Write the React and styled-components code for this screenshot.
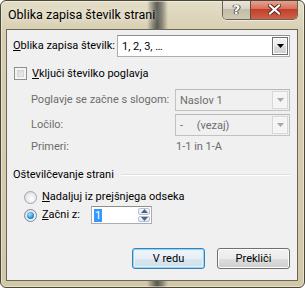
import React from 'react'
import styled, { createGlobalStyle, css } from 'styled-components'

const GlobalStyle = createGlobalStyle`
    html, body {
        margin: 0;
        padding: 0;
        background: #ffffff;
    }
    body {
        font-family: Roboto, "Liberation Sans", sans-serif;
        font-size: 11px;
        color: #000;
    }
`

function DropArrow({ disabled }) {
    return (
        <svg width="7" height="4" viewBox="0 0 7 4">
            <path d="M0 0 H7 L3.5 4 Z" fill={disabled ? '#a8a8a8' : '#000'} />
        </svg>
    )
}

function Select({ value, width, disabled }) {
    return (
        <SelectBox $width={width} $disabled={disabled}>
            <SelectText $disabled={disabled}>{value}</SelectText>
            <DropButton $disabled={disabled}>
                <DropArrow disabled={disabled} />
            </DropButton>
        </SelectBox>
    )
}

function App() {
    return (
        <>
            <GlobalStyle />
            <Window>
                <TitleBar>
                    <Title>Oblika zapisa številk strani</Title>
                    <CaptionButtons>
                        <CaptionButton>
                            <HelpGlyph>?</HelpGlyph>
                        </CaptionButton>
                        <CaptionButton $close>
                            <svg width="13" height="11" viewBox="0 0 13 11">
                                <path d="M2 1.5 L11 9.5 M11 1.5 L2 9.5" stroke="#5a2418" strokeWidth="4" strokeLinecap="square" />
                                <path d="M2 1.5 L11 9.5 M11 1.5 L2 9.5" stroke="#ffffff" strokeWidth="2.2" strokeLinecap="square" />
                            </svg>
                        </CaptionButton>
                    </CaptionButtons>
                </TitleBar>

                <Client>
                    <Row $top={5} $left={6} $height={22}>
                        <Label $width={104}><u>O</u>blika zapisa številk:</Label>
                        <Select value="1, 2, 3, …" width={173} />
                    </Row>

                    <Row $top={10} $left={7} $height={13}>
                        <CheckBox />
                        <Label $gap={5}><u>V</u>ključi številko poglavja</Label>
                    </Row>

                    <Row $top={9} $left={24} $height={22}>
                        <Label $width={144} $disabled>Poglavje se začne s slogom:</Label>
                        <Select value="Naslov 1" width={115} disabled />
                    </Row>
                    <Row $top={3} $left={24} $height={22}>
                        <Label $width={144} $disabled>Ločilo:</Label>
                        <Select value={<>-&nbsp;&nbsp;&nbsp;&nbsp;&nbsp;(vezaj)</>} width={115} disabled />
                    </Row>
                    <Row $top={4} $left={24} $height={14}>
                        <Label $width={145} $disabled>Primeri:</Label>
                        <Label $disabled>1-1 in 1-A</Label>
                    </Row>

                    <GroupHeader>
                        <span>Oštevilčevanje strani</span>
                        <GroupLine />
                    </GroupHeader>

                    <Row $top={7} $left={17} $height={16}>
                        <Radio />
                        <Label $gap={5}><u>N</u>adaljuj iz prejšnjega odseka</Label>
                    </Row>
                    <Row $top={1} $left={17} $height={18}>
                        <Radio $checked />
                        <Label $gap={5} $width={49}><u>Z</u>ačni z:</Label>
                        <SpinBox>
                            <SpinValue><Selected>1</Selected></SpinValue>
                            <SpinButtons>
                                <SpinButton>
                                    <svg width="7" height="4" viewBox="0 0 7 4"><path d="M0 4 H7 L3.5 0 Z" fill="#4d6185" /></svg>
                                </SpinButton>
                                <SpinButton>
                                    <svg width="7" height="4" viewBox="0 0 7 4"><path d="M0 0 H7 L3.5 4 Z" fill="#4d6185" /></svg>
                                </SpinButton>
                            </SpinButtons>
                        </SpinBox>
                    </Row>

                    <ButtonRow>
                        <PushButton $default>V redu</PushButton>
                        <PushButton>Prekliči</PushButton>
                    </ButtonRow>
                </Client>
            </Window>
        </>
    )
}

export default App


const Window = styled.div`
    position: relative;
    width: 305px;
    height: 288px;
    box-sizing: border-box;
    border: 1px solid #4a4638;
    border-radius: 6px;
    background:
        linear-gradient(90deg,
            rgba(0,0,0,0) 0, rgba(0,0,0,0) 146px,
            rgba(70,70,66,0.55) 152px, rgba(60,62,60,0.8) 156px, rgba(70,70,66,0.55) 161px,
            rgba(0,0,0,0) 167px),
        linear-gradient(180deg, #e4ddc6 0, #d8cfb2 30px, #d2c8a8 100%);
    box-shadow: inset 0 0 0 1px rgba(255,255,255,0.45);
    display: flex;
    flex-direction: column;
    overflow: hidden;
`

const TitleBar = styled.div`
    height: 28px;
    display: flex;
    align-items: flex-start;
`

const Title = styled.div`
    padding: 6px 0 0 7px;
    font-size: 12.5px;
    line-height: 16px;
    color: #000;
    text-shadow: 0 0 6px rgba(255,255,255,0.9);
`

const CaptionButtons = styled.div`
    margin-left: auto;
    margin-right: 6px;
    margin-top: -1px;
    display: flex;
    height: 19px;
    border: 1px solid #6a6456;
    border-top: none;
    border-radius: 0 0 5px 5px;
    overflow: hidden;
    box-shadow: 0 1px 0 rgba(255,255,255,0.5);
`

const CaptionButton = styled.div`
    width: ${p => p.$close ? 47 : 27}px;
    height: 19px;
    display: flex;
    align-items: center;
    justify-content: center;
    box-sizing: border-box;
    background: linear-gradient(180deg, #ede9de 0, #d9d3c3 45%, #c4bca7 50%, #cfc8b4 100%);
    ${p => p.$close && css`
        border-left: 1px solid #6a4a3c;
        background: linear-gradient(180deg, #e8a898 0, #d8725c 45%, #c2402a 50%, #d06048 100%);
    `}
`

const HelpGlyph = styled.span`
    font-family: "DejaVu Sans", sans-serif;
    font-weight: 700;
    font-size: 13px;
    line-height: 13px;
    color: #ffffff;
    text-shadow: 0 0 1px #3a3a3a, 0 0 1px #3a3a3a, 1px 0 0 #555, -1px 0 0 #555;
`

const Client = styled.div`
    margin: 0 6px 6px 5px;
    height: 252px;
    box-sizing: border-box;
    border: 1px solid #6b6658;
    background: #f0f0f0;
    display: flex;
    flex-direction: column;
`

const Row = styled.div`
    display: flex;
    align-items: center;
    height: ${p => p.$height}px;
    margin-top: ${p => p.$top}px;
    padding-left: ${p => p.$left}px;
`

const Label = styled.span`
    flex: none;
    white-space: nowrap;
    line-height: 14px;
    width: ${p => p.$width ? `${p.$width}px` : 'auto'};
    margin-left: ${p => p.$gap || 0}px;
    color: ${p => p.$disabled ? '#6d6d6d' : '#000'};
    u {
        text-decoration: underline;
        text-underline-offset: 1px;
    }
`

const SelectBox = styled.div`
    width: ${p => p.$width}px;
    height: 22px;
    box-sizing: border-box;
    display: flex;
    align-items: stretch;
    border: 1px solid ${p => p.$disabled ? '#c2c2c2' : '#abadb3'};
    border-top-color: ${p => p.$disabled ? '#b8b8b8' : '#8e8f8f'};
    background: ${p => p.$disabled ? '#f0f0f0' : '#ffffff'};
    padding: 1px;
`

const SelectText = styled.div`
    flex: 1;
    padding-left: 3px;
    display: flex;
    align-items: center;
    white-space: nowrap;
    color: ${p => p.$disabled ? '#6d6d6d' : '#000'};
`

const DropButton = styled.div`
    width: 16px;
    box-sizing: border-box;
    display: flex;
    align-items: center;
    justify-content: center;
    border: 1px solid ${p => p.$disabled ? '#d6d6d6' : '#707070'};
    background: ${p => p.$disabled
        ? '#f4f4f4'
        : 'linear-gradient(180deg, #f2f2f2 0, #ebebeb 50%, #dddddd 51%, #cfcfcf 100%)'};
    box-shadow: inset 0 0 0 1px ${p => p.$disabled ? '#f8f8f8' : '#fcfcfc'};
`

const CheckBox = styled.div`
    width: 13px;
    height: 13px;
    box-sizing: border-box;
    border: 1px solid #8e8f8f;
    background: linear-gradient(135deg, #cbcfd5 0, #f6f6f6 100%);
    box-shadow: inset 0 0 0 2px #f4f4f4, inset 0 0 0 3px #d2d4d8;
`

const GroupHeader = styled.div`
    margin-top: 14px;
    height: 14px;
    padding: 0 7px 0 6px;
    display: flex;
    align-items: center;
    span {
        white-space: nowrap;
        line-height: 14px;
    }
`

const GroupLine = styled.div`
    flex: 1;
    margin-left: 7px;
    height: 0;
    border-top: 1px solid #d5dfe5;
    border-bottom: 1px solid #ffffff;
`

const Radio = styled.div`
    flex: none;
    width: 13px;
    height: 13px;
    box-sizing: border-box;
    border-radius: 50%;
    border: 1px solid #a0a6ad;
    background: radial-gradient(circle at 60% 60%, #ffffff 0, #e4e6e9 60%, #c9ccd1 100%);
    position: relative;
    ${p => p.$checked && css`
        border-color: #7f8a96;
        &::after {
            content: '';
            position: absolute;
            left: 2px;
            top: 2px;
            width: 7px;
            height: 7px;
            border-radius: 50%;
            background: radial-gradient(circle at 40% 35%, #a7e3ff 0, #2e98d9 55%, #10508a 100%);
        }
    `}
`

const SpinBox = styled.div`
    width: 61px;
    height: 18px;
    box-sizing: border-box;
    display: flex;
    border: 1px solid #abadb3;
    border-top-color: #8e8f8f;
    background: #ffffff;
    padding: 1px;
`

const SpinValue = styled.div`
    flex: 1;
    display: flex;
    align-items: center;
    padding-left: 1px;
`

const Selected = styled.span`
    background: #3399ff;
    color: #ffffff;
    line-height: 13px;
    padding: 0 1px;
`

const SpinButtons = styled.div`
    width: 12px;
    display: flex;
    flex-direction: column;
    gap: 1px;
`

const SpinButton = styled.div`
    flex: 1;
    display: flex;
    align-items: center;
    justify-content: center;
    border: 1px solid #b6c3d1;
    border-radius: 2px;
    background: linear-gradient(180deg, #f6f9fc 0, #e0e8f1 100%);
`

const ButtonRow = styled.div`
    margin-top: 24px;
    padding-right: 7px;
    display: flex;
    justify-content: flex-end;
    gap: 12px;
`

const PushButton = styled.div`
    width: 73px;
    height: 21px;
    box-sizing: border-box;
    display: flex;
    align-items: center;
    justify-content: center;
    border: 1px solid #707070;
    border-radius: 3px;
    background: linear-gradient(180deg, #f2f2f2 0, #ebebeb 50%, #dddddd 51%, #cfcfcf 100%);
    box-shadow: inset 0 0 0 1px #fcfcfc;
    ${p => p.$default && css`
        border-color: #3c7fb1;
        background: linear-gradient(180deg, #f1f7fb 0, #e6eff5 50%, #d9e6ef 51%, #d0e0eb 100%);
        box-shadow: inset 0 0 0 1px #8fd6f7, inset 0 0 0 2px #e4f3fa;
    `}
`
